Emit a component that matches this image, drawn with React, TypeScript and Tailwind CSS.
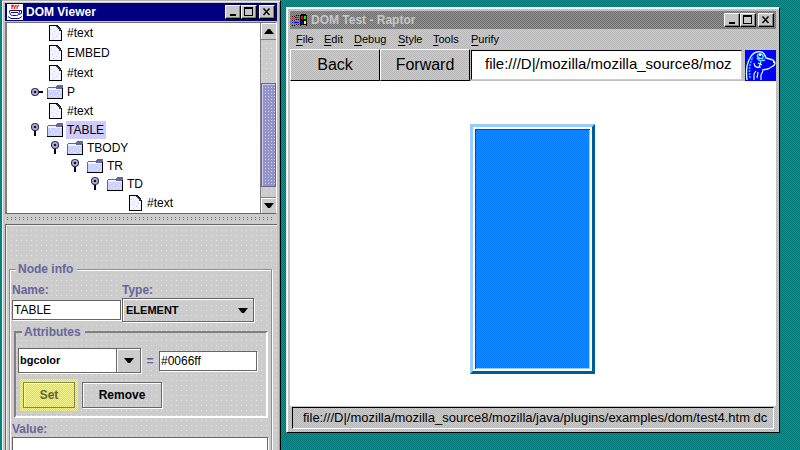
import React from "react";

type Node = { label: string; depth: number; kind: "leaf" | "open" | "closed"; selected?: boolean };

const nodes: Node[] = [
  { label: "#text", depth: 0, kind: "leaf" },
  { label: "EMBED", depth: 0, kind: "leaf" },
  { label: "#text", depth: 0, kind: "leaf" },
  { label: "P", depth: 0, kind: "closed" },
  { label: "#text", depth: 0, kind: "leaf" },
  { label: "TABLE", depth: 0, kind: "open", selected: true },
  { label: "TBODY", depth: 1, kind: "open" },
  { label: "TR", depth: 2, kind: "open" },
  { label: "TD", depth: 3, kind: "open" },
  { label: "#text", depth: 4, kind: "leaf" },
];

const menus = [
  { label: "File", width: "w-[28px]" },
  { label: "Edit", width: "w-[30px]" },
  { label: "Debug", width: "w-[44px]" },
  { label: "Style", width: "w-[35px]" },
  { label: "Tools", width: "w-[38px]" },
  { label: "Purify", width: "w-[40px]" },
];

const GREY = "bg-[repeating-conic-gradient(#b8b8b8_0_25%,#cbcbcb_0_50%)] bg-[length:2px_2px]";
const METAL = "bg-[conic-gradient(from_270deg_at_1px_1px,#e4e2e2_25%,#cccccc_0)] bg-[length:5px_5px]";

function FileIcon() {
  return (
    <svg width="16" height="18" viewBox="0 0 16 18" shapeRendering="crispEdges" aria-hidden="true">
      <path d="M2.5 1.5H10.5L14.5 6.5V16.5H2.5Z" fill="#f4f4ff" stroke="#000" />
      <path d="M9 2h2v1h1v1h1v1h1v2h-2v-2h-1v-1h-1v-1h-1z" fill="#1f4545" />
      <path d="M4 5h1v1h-1zM7 7h1v1h-1zM5 10h1v1h-1zM9 12h1v1h-1zM11 9h1v1h-1zM6 14h1v1h-1z" fill="#ccccff" />
    </svg>
  );
}

function FolderIcon() {
  return (
    <svg width="16" height="16" viewBox="0 0 16 16" shapeRendering="crispEdges" aria-hidden="true">
      <path d="M0 4h1v-1h8v-1h7v13h-16z" fill="#666699" />
      <path d="M1 4h8v1h6v9h-14z" fill="#ccd2ff" />
      <path d="M1 4h8v1h6v1h-14z" fill="#f2f2ff" />
      <path d="M9 2h1v-1h6v3h-7z" fill="#666699" />
      <path d="M15 4h1v11h-1zM0 14h16v1h-16z" fill="#000" />
      <path d="M3 7h1v1h-1zM6 9h1v1h-1zM9 7h1v1h-1zM12 8h1v1h-1zM4 11h1v1h-1zM10 11h1v1h-1zM7 12h1v1h-1zM13 12h1v1h-1z" fill="#eef6ff" />
    </svg>
  );
}

function Handle({ open }: { open: boolean }) {
  return (
    <svg width="16" height="16" viewBox="0 0 16 16" aria-hidden="true">
      {open ? <path d="M3 8h2v6H3z" fill="#000" /> : <path d="M7 7h5v2H7z" fill="#000" />}
      <circle cx="4" cy={open ? 5 : 8} r="3.5" fill="#b4b4e6" stroke="#333355" strokeWidth="1.2" />
      <circle cx="4" cy={open ? 5 : 8} r="1.3" fill="#111" />
    </svg>
  );
}

function TreeRow({ node }: { node: Node }) {
  const leaf = node.kind === "leaf";
  return (
    <li className={`flex items-center ${leaf ? "h-5" : "h-[18px]"}`} style={{ paddingLeft: 24 + node.depth * 20 }}>
      <span className="w-4 shrink-0">{!leaf && <Handle open={node.kind === "open"} />}</span>
      <span className="w-4 shrink-0">{leaf ? <FileIcon /> : <FolderIcon />}</span>
      <span className={`ml-[3px] h-[18px] pr-[2px] pl-px leading-[18px] ${node.selected ? "bg-[#ccccff]" : ""}`}>{node.label}</span>
    </li>
  );
}

function WindowButtons() {
  const cls =
    "flex h-[14px] w-4 items-center justify-center border border-t-white border-l-white border-r-black border-b-black bg-[#c6c6c6] shadow-[inset_-1px_-1px_0_#808080]";
  return (
    <div className="flex">
      <button aria-label="Minimize" className={cls}>
        <svg width="12" height="10" viewBox="0 0 12 10"><path d="M3 7h6v2H3z" /></svg>
      </button>
      <button aria-label="Maximize" className={cls}>
        <svg width="12" height="10" viewBox="0 0 12 10" shapeRendering="crispEdges"><path d="M1 0h9v9H1zM2 2v6h7V2z" fillRule="evenodd" /></svg>
      </button>
      <button aria-label="Close" className={`ml-[2px] ${cls}`}>
        <svg width="12" height="10" viewBox="0 0 12 10"><path d="M2.5 1.500l6 6.500m0-6.500l-6 6.500" stroke="#000" strokeWidth="1.5" /></svg>
      </button>
    </div>
  );
}

function Arrow({ up = false }: { up?: boolean }) {
  return (
    <svg width="10" height="5" viewBox="0 0 10 5" aria-hidden="true">
      <path d={up ? "M0 5h10L6 0H4z" : "M0 0h10L6 5H4z"} />
    </svg>
  );
}

function JavaIcon() {
  return (
    <svg width="16" height="16" viewBox="0 0 16 16" aria-hidden="true">
      <path d="M0 0h16v16H0z" fill="#fff" />
      <path d="M5 5V3l2-2M7.500 5V3l2-2M10 5V3l2-2M4 2l2-1" stroke="#f02020" fill="none" strokeWidth="1.2" />
      <path d="M3 6.500h9M2.500 6.500c0 3 1 5 3 5h4c2 0 3-2 3-5M12 6.500h2.500v3L12 10.500M4 8.500h7M1 12.500l3 2h8l3-2" stroke="#101080" fill="none" />
    </svg>
  );
}

function WindowsFlag() {
  return (
    <svg width="16" height="14" viewBox="0 0 16 14" shapeRendering="crispEdges" aria-hidden="true">
      <path d="M9 1h5v1h1v11h-1v-1H9v1H8V2h1z" fill="#000" />
      <path d="M9 3h2v3H9z" fill="#f00" />
      <path d="M12 3h2v3h-2z" fill="#0f0" />
      <path d="M9 8h2v3H9z" fill="#00f" />
      <path d="M12 8h2v3h-2z" fill="#ff0" />
      <path d="M0 3h1v1H0zM2 3h1v1H2zM4 2h1v1H4zM6 2h1v1H6zM0 7h1v1H0zM2 7h1v1H2zM4 6h1v1H4zM6 6h1v1H6zM0 12h1v1H0zM2 12h1v1H2zM4 11h1v1H4zM6 11h1v1H6zM3 4h1v1H3zM3 9h1v1H3z" fill="#000" />
      <path d="M0 5h1v1H0zM2 5h1v1H2zM4 4h3v1H4z" fill="#f00" />
      <path d="M0 9h1v1H0zM2 9h1v1H2zM4 9h3v1H4z" fill="#00f" />
    </svg>
  );
}

function Raptor() {
  return (
    <svg width="31" height="31" viewBox="0 0 31 31" className="shrink-0" role="img" aria-label="Mozilla">
      <path d="M0 0h31v31H0z" fill="#0000f8" />
      <g fill="none" strokeLinejoin="round">
        <path d="M2 30C1 22 2 13 5 8C7 3 12 1 16 2C19 2 20 5 21 8L28 10C31 12 30 15 28 16L23 19L17 20" stroke="#c8ffff" strokeWidth="1.4" />
        <path d="M5 28C4 21 4 14 8 7" stroke="#20d8ff" strokeWidth="1.6" strokeDasharray="2 1" />
        <path d="M12 6c1-3 5-3 6 0s-3 4-6 0M12 8l3 3l5-1" stroke="#5ff" strokeWidth="1.3" />
        <path d="M9 13c0 4 3 5 7 4M13 13l4 2M16 12l-2 5M11 21l-2 3v6M18 21l-2 4v5M13 22l-1 6" stroke="#d8ffff" strokeWidth="1.2" />
      </g>
      <path d="M14 4h2v2h-2zM28 11h2v2h-2z" fill="#fff" />
    </svg>
  );
}

function DomViewer() {
  const label = "font-bold text-[#666699] leading-4";
  const field = "border border-[#666666] bg-white shadow-[1px_1px_0_#fff] outline-none";
  return (
    <section className="flex w-[279px] shrink-0 flex-col overflow-hidden border-t border-r border-t-[#b0b0b0] border-r-black bg-[#c6c6c6] px-[3px] pt-[2px] shadow-[inset_1px_1px_0_#efefef,inset_-1px_0_0_#999]">
      <header className="flex h-[18px] shrink-0 items-center justify-between bg-[#000080] px-[2px]">
        <h1 className="flex items-center gap-[3px] font-bold leading-[18px] text-white">
          <JavaIcon />
          DOM Viewer
        </h1>
        <WindowButtons />
      </header>

      <div className="mt-px flex h-[192px] shrink-0 border border-t-[#707070] border-r-white border-b-[#666] border-l-2 border-l-[#808080] bg-white">
        <ul className="min-w-0 flex-1">
          {nodes.map((n, i) => (
            <TreeRow key={i} node={n} />
          ))}
        </ul>
        <div className={`flex w-4 flex-col border-l border-[#808080] ${METAL}`}>
          <button aria-label="Scroll up" className="flex h-[17px] items-center justify-center border-b border-[#808080] bg-[#ccc] shadow-[inset_1px_1px_0_#fff]">
            <Arrow up />
          </button>
          <div className="h-[43px]" />
          <div className="h-[104px] border border-[#666699] bg-[conic-gradient(from_270deg_at_1px_1px,#ccccff_25%,#9393c4_0)] bg-[length:3px_3px] shadow-[inset_1px_1px_0_#ccccff]" />
          <div className="flex-1" />
          <button aria-label="Scroll down" className="flex h-4 items-center justify-center border-t border-[#808080] bg-[#ccc] shadow-[inset_1px_1px_0_#fff]">
            <Arrow />
          </button>
        </div>
      </div>

      <div className="h-[10px] shrink-0 bg-[#cccccc] px-[2px] py-[3px]">
        <div className="h-1 bg-[conic-gradient(from_270deg_at_1px_1px,#777_25%,transparent_0)] bg-[length:4px_2px]" />
      </div>

      <div className={`flex-1 border-t border-l border-[#666] px-[3px] pt-9 shadow-[inset_1px_1px_0_#eee] ${METAL}`}>
        <fieldset className="mr-[2px] h-[300px] min-w-0 border border-[#8c8c8c] pt-[5px] pr-[2px] pl-[2px] shadow-[inset_1px_1px_0_#fff,1px_1px_0_#fff]">
          <legend className={`ml-1 h-4 bg-[#cccccc] pr-1 pl-[2px] ${label}`}>Node info</legend>
          <div className="grid grid-cols-[110px_132px] items-center">
            <label htmlFor="name" className={label}>Name:</label>
            <label htmlFor="type" className={label}>Type:</label>
            <input id="name" defaultValue="TABLE" className={`h-5 w-[109px] px-px ${field}`} />
            <span className="grid h-6 items-center">
              <select id="type" defaultValue="ELEMENT" className="col-start-1 row-start-1 h-6 appearance-none border border-[#666] bg-transparent pl-[3px] text-[11px] font-bold shadow-[inset_1px_1px_0_#fff,1px_1px_0_#fff]">
                <option>ELEMENT</option>
              </select>
              <span className="pointer-events-none col-start-1 row-start-1 mr-[6px] justify-self-end"><Arrow /></span>
            </span>
          </div>

          <fieldset className="mt-[2px] mr-px ml-[2px] min-w-0 border-2 border-t-[#808080] border-r-white border-b-white border-l-[#808080] px-[2px] pt-2 pb-[5px]">
            <legend className={`ml-1 h-4 bg-[#cccccc] pr-1 pl-[2px] ${label}`}>Attributes</legend>
            <div className="flex items-center">
              <span className="grid h-[25px] w-[123px] items-center">
                <select aria-label="Attribute" defaultValue="bgcolor" className={`col-start-1 row-start-1 h-[25px] appearance-none pl-px text-[11px] font-bold ${field}`}>
                  <option>bgcolor</option>
                </select>
                <span className="pointer-events-none col-start-1 row-start-1 mr-px flex h-[23px] w-6 items-center justify-center justify-self-end border-l border-[#666] bg-[#cccccc] shadow-[inset_1px_1px_0_#fff]"><Arrow /></span>
              </span>
              <label htmlFor="attr" className="w-[18px] text-center font-bold text-[#666699]">=</label>
              <input id="attr" defaultValue="#0066ff" className={`h-5 w-[98px] px-px ${field}`} />
            </div>
            <div className="mt-[6px] flex items-center gap-1 pl-[2px]">
              <span className="bg-[repeating-conic-gradient(#f4f48c_0_25%,#d2d2b0_0_50%)] bg-[length:2px_2px] p-[3px]">
                <button className="block h-[26px] w-[52px] border border-[#85855a] font-bold text-[#666633] shadow-[inset_1px_1px_0_#ffffa0]">Set</button>
              </span>
              <button className="h-[26px] w-20 border border-[#666] font-bold shadow-[inset_1px_1px_0_#fff,1px_1px_0_#fff]">Remove</button>
            </div>
          </fieldset>

          <label htmlFor="value" className={`mt-[3px] block ${label}`}>Value:</label>
          <textarea id="value" className={`block h-20 w-[256px] resize-none ${field}`} />
        </fieldset>
      </div>
    </section>
  );
}

function Browser() {
  const tool = "h-8 w-[90px] shrink-0 border border-t-white border-r-black border-b-black border-l-white text-base";
  return (
    <section className={`mt-[7px] mr-5 mb-[17px] ml-[5px] flex min-w-0 flex-1 flex-col border border-t-[#e8e8e8] border-r-black border-b-black border-l-[#e8e8e8] p-[3px] shadow-[inset_1px_1px_0_#fff] ${GREY}`}>
      <header className="flex h-[18px] shrink-0 items-center justify-between bg-[repeating-conic-gradient(#707070_0_25%,#929292_0_50%)] bg-[length:2px_2px] px-[2px]">
        <h1 className="flex items-center gap-[3px] font-bold leading-[18px] text-[#c6c6c6]">
          <WindowsFlag />
          DOM Test - Raptor
        </h1>
        <WindowButtons />
      </header>
      <nav className="flex h-5 shrink-0 items-center pl-[6px] text-[11px]">
        {menus.map((m) => (
          <button key={m.label} className={`text-left ${m.width}`}>
            <span className="underline underline-offset-2">{m.label[0]}</span>
            {m.label.slice(1)}
          </button>
        ))}
      </nav>
      <div className="flex h-8 shrink-0 items-center">
        <button className={tool}>Back</button>
        <button className={tool}>Forward</button>
        <div className="ml-px h-[30px] min-w-0 flex-1 border border-t-black border-r-[#ccc] border-b-[#ccc] border-l-black bg-white pr-1 pl-[13px]">
          <input aria-label="Address" defaultValue="file:///D|/mozilla/mozilla_source8/moz" className="block h-6 w-full bg-transparent text-[15px] outline-none" />
        </div>
        <div className="ml-[3px]"><Raptor /></div>
      </div>
      <main className="flex min-h-0 flex-1 justify-center bg-white pt-[43px] pr-[2px]">
        <div className="h-[250px] w-[125px] border-[3px] border-t-[#99ccff] border-r-[#005c94] border-b-[#005c94] border-l-[#99ccff]">
          <div className="h-full border-2 border-white bg-[repeating-conic-gradient(#0099ff_0_25%,#007aff_0_50%)] bg-[length:2px_2px] shadow-[inset_1px_1px_0_#004c99,inset_-1px_-1px_0_#99ccff]" />
        </div>
      </main>
      <footer className="mx-[2px] mt-px h-[22px] shrink-0 overflow-hidden border border-t-black border-r-white border-b-white border-l-black pr-[5px] pl-[10px]">
        <p className="overflow-hidden text-[13px] leading-5 whitespace-nowrap">
          file:///D|/mozilla/mozilla_source8/mozilla/java/plugins/examples/dom/test4.htm dc
        </p>
      </footer>
    </section>
  );
}

export default function App() {
  return (
    <div className="flex h-screen overflow-hidden bg-[repeating-conic-gradient(#009494_0_25%,#007878_0_50%)] bg-[length:2px_2px] pl-[2px] font-['Liberation_Sans',Arial,sans-serif] text-[12px] text-black">
      <DomViewer />
      <Browser />
    </div>
  );
}
